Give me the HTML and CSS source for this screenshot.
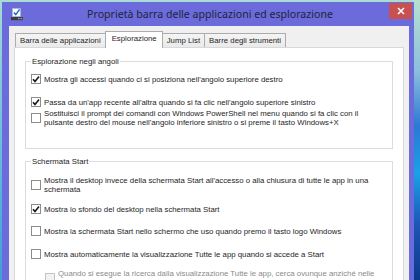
FILE: index.html
```html
<!DOCTYPE html>
<html lang="it">
<head>
<meta charset="utf-8">
<title>Proprietà barra delle applicazioni ed esplorazione</title>
<link rel="stylesheet" href="styles.css">
</head>
<body>
<div class="window">
  <div class="titlebar">
    <svg class="app-icon" width="12" height="13" viewBox="0 0 12 13">
      <rect x="1.5" y="0.5" width="8" height="8" fill="#ffffff" stroke="#a9b8c8" stroke-width="0.6"/>
      <path d="M3 4.6 L4.8 6.6 L8.6 1.4" fill="none" stroke="#1f6fd6" stroke-width="1.6"/>
      <rect x="0" y="9" width="12" height="3.2" fill="#3c3c44"/>
      <rect x="7" y="10.2" width="1" height="1" fill="#c8c8c8"/>
      <rect x="8.6" y="10.2" width="1" height="1" fill="#c8c8c8"/>
      <rect x="10.2" y="10.2" width="1" height="1" fill="#c8c8c8"/>
    </svg>
    <div class="title">Proprietà barra delle applicazioni ed esplorazione</div>
    <div class="close">
      <svg width="8" height="8" viewBox="0 0 8 8"><path d="M1 1 L7 7 M7 1 L1 7" stroke="#ffffff" stroke-width="1.6"/></svg>
    </div>
  </div>
  <div class="client">
    <div class="tabs">
      <div class="tab">Barra delle applicazioni</div>
      <div class="tab active">Esplorazione</div>
      <div class="tab">Jump List</div>
      <div class="tab">Barre degli strumenti</div>
    </div>
    <div class="page">
      <fieldset class="group">
        <legend>Esplorazione negli angoli</legend>
        <div class="row">
          <span class="cb"><svg class="tick" viewBox="0 0 8 8"><path d="M1 4.2 L3 6.4 L7 1.4"/></svg></span>
          <span class="lbl">Mostra gli accessi quando ci si posiziona nell'angolo superiore destro</span>
        </div>
        <div class="row mt13">
          <span class="cb"><svg class="tick" viewBox="0 0 8 8"><path d="M1 4.2 L3 6.4 L7 1.4"/></svg></span>
          <span class="lbl">Passa da un'app recente all'altra quando si fa clic nell'angolo superiore sinistro</span>
        </div>
        <div class="row mt2">
          <span class="cb"></span>
          <span class="lbl">Sostituisci il prompt dei comandi con Windows PowerShell nel menu quando si fa clic con il<br>pulsante destro del mouse nell'angolo inferiore sinistro o si preme il tasto Windows+X</span>
        </div>
      </fieldset>
      <fieldset class="group second">
        <legend>Schermata Start</legend>
        <div class="row">
          <span class="cb"></span>
          <span class="lbl">Mostra il desktop invece della schermata Start all'accesso o alla chiusura di tutte le app in una<br>schermata</span>
        </div>
        <div class="row mt10">
          <span class="cb"><svg class="tick" viewBox="0 0 8 8"><path d="M1 4.2 L3 6.4 L7 1.4"/></svg></span>
          <span class="lbl">Mostra lo sfondo del desktop nella schermata Start</span>
        </div>
        <div class="row mt12">
          <span class="cb"></span>
          <span class="lbl">Mostra la schermata Start nello schermo che uso quando premo il tasto logo Windows</span>
        </div>
        <div class="row mt13">
          <span class="cb"></span>
          <span class="lbl">Mostra automaticamente la visualizzazione Tutte le app quando si accede a Start</span>
        </div>
        <div class="row mt10 sub disabled">
          <span class="cb"></span>
          <span class="lbl">Quando si esegue la ricerca dalla visualizzazione Tutte le app, cerca ovunque anziché nelle</span>
        </div>
      </fieldset>
    </div>
  </div>
</div>
</body>
</html>
```

FILE: styles.css
```css
* { box-sizing: border-box; }

html, body { margin: 0; }

body {
  width: 420px;
  height: 280px;
  overflow: hidden;
  padding: 2px 0 0 2px;
  background:
    linear-gradient(180deg, #a6dbd4 0, #7cc6d9 35%, #56b2dc 70%, #3f9fd8 100%) left top / 2px 100% no-repeat,
    linear-gradient(180deg, #b7e0d0 0, #8cc0dc 25%, #2c78d4 45%, #18a2e6 62%, #1d56b6 80%, #0c3a8a 100%) right top / 6px 100% no-repeat,
    #aadcd5;
  font-family: "Liberation Sans", Arial, sans-serif;
  font-size: 7.8px;
  line-height: 9px;
  color: #1e1e1e;
}

.window {
  width: 412px;
  height: 300px;
  background: #6b6bdb;
  padding: 0 5px 0 7px;
  display: flex;
  flex-direction: column;
}

.titlebar {
  height: 24px;
  flex: none;
  display: grid;
  grid-template-columns: 1fr auto 1fr;
  align-items: start;
}

.app-icon {
  margin: 6px 0 0 2px;
}

.title {
  font-family: "Noto Sans", "Liberation Sans", sans-serif;
  font-size: 10.6px;
  line-height: 24px;
  color: #23233a;
  white-space: nowrap;
  padding-left: 2px;
}

.close {
  justify-self: end;
  width: 23px;
  height: 16px;
  margin: 1px -3px 0 0;
  background: #c75050;
  display: flex;
  align-items: center;
  justify-content: center;
}

.client {
  flex: 1;
  background: #f0f0f0;
  padding: 5px 5px 0 5px;
  display: flex;
  flex-direction: column;
}

.tabs {
  height: 16px;
  flex: none;
  display: flex;
  align-items: flex-end;
  padding-left: 1px;
}

.tab {
  height: 14px;
  padding: 0 4px;
  border: 1px solid #acacac;
  border-bottom: 0;
  background: linear-gradient(180deg, #f4f4f4, #eaeaea);
  line-height: 13px;
  white-space: nowrap;
}

.tab.active {
  height: 17px;
  margin-bottom: -1px;
  padding: 0 5px 0 6px;
  background: #ffffff;
  line-height: 14px;
  position: relative;
  z-index: 1;
}

.tab + .tab {
  margin-left: -1px;
}

.page {
  flex: 1;
  background: #ffffff;
  border: 1px solid #d9d9d9;
  padding: 9px 10px 0 10px;
  overflow: hidden;
}

.group {
  margin: 0;
  min-width: 0;
  border: 1px solid #dcdcdc;
  padding: 8px 4px 21px 5px;
}

.group.second {
  margin-top: 8px;
  padding-top: 10px;
}

.group legend {
  padding: 0 1px;
  line-height: 9px;
}

.row {
  display: flex;
  align-items: center;
  gap: 3px;
  white-space: nowrap;
}

.cb {
  flex: none;
  width: 10px;
  height: 10px;
  border: 1px solid #8c8c8c;
  background: #ffffff;
  display: flex;
  align-items: center;
  justify-content: center;
}

.tick {
  width: 8px;
  height: 8px;
}

.tick path {
  fill: none;
  stroke: #1a1a1a;
  stroke-width: 1.6;
}

.mt2 { margin-top: 2px; }
.mt10 { margin-top: 10px; }
.mt12 { margin-top: 12px; }
.mt13 { margin-top: 13px; }

.row.sub {
  margin-left: 14px;
  align-items: flex-start;
}

.row.sub .cb { margin-top: 4px; }

.row.disabled { color: #8a8a8a; }

.row.disabled .cb {
  border-color: #c4c4c4;
  background: #f2f2f2;
}
```
